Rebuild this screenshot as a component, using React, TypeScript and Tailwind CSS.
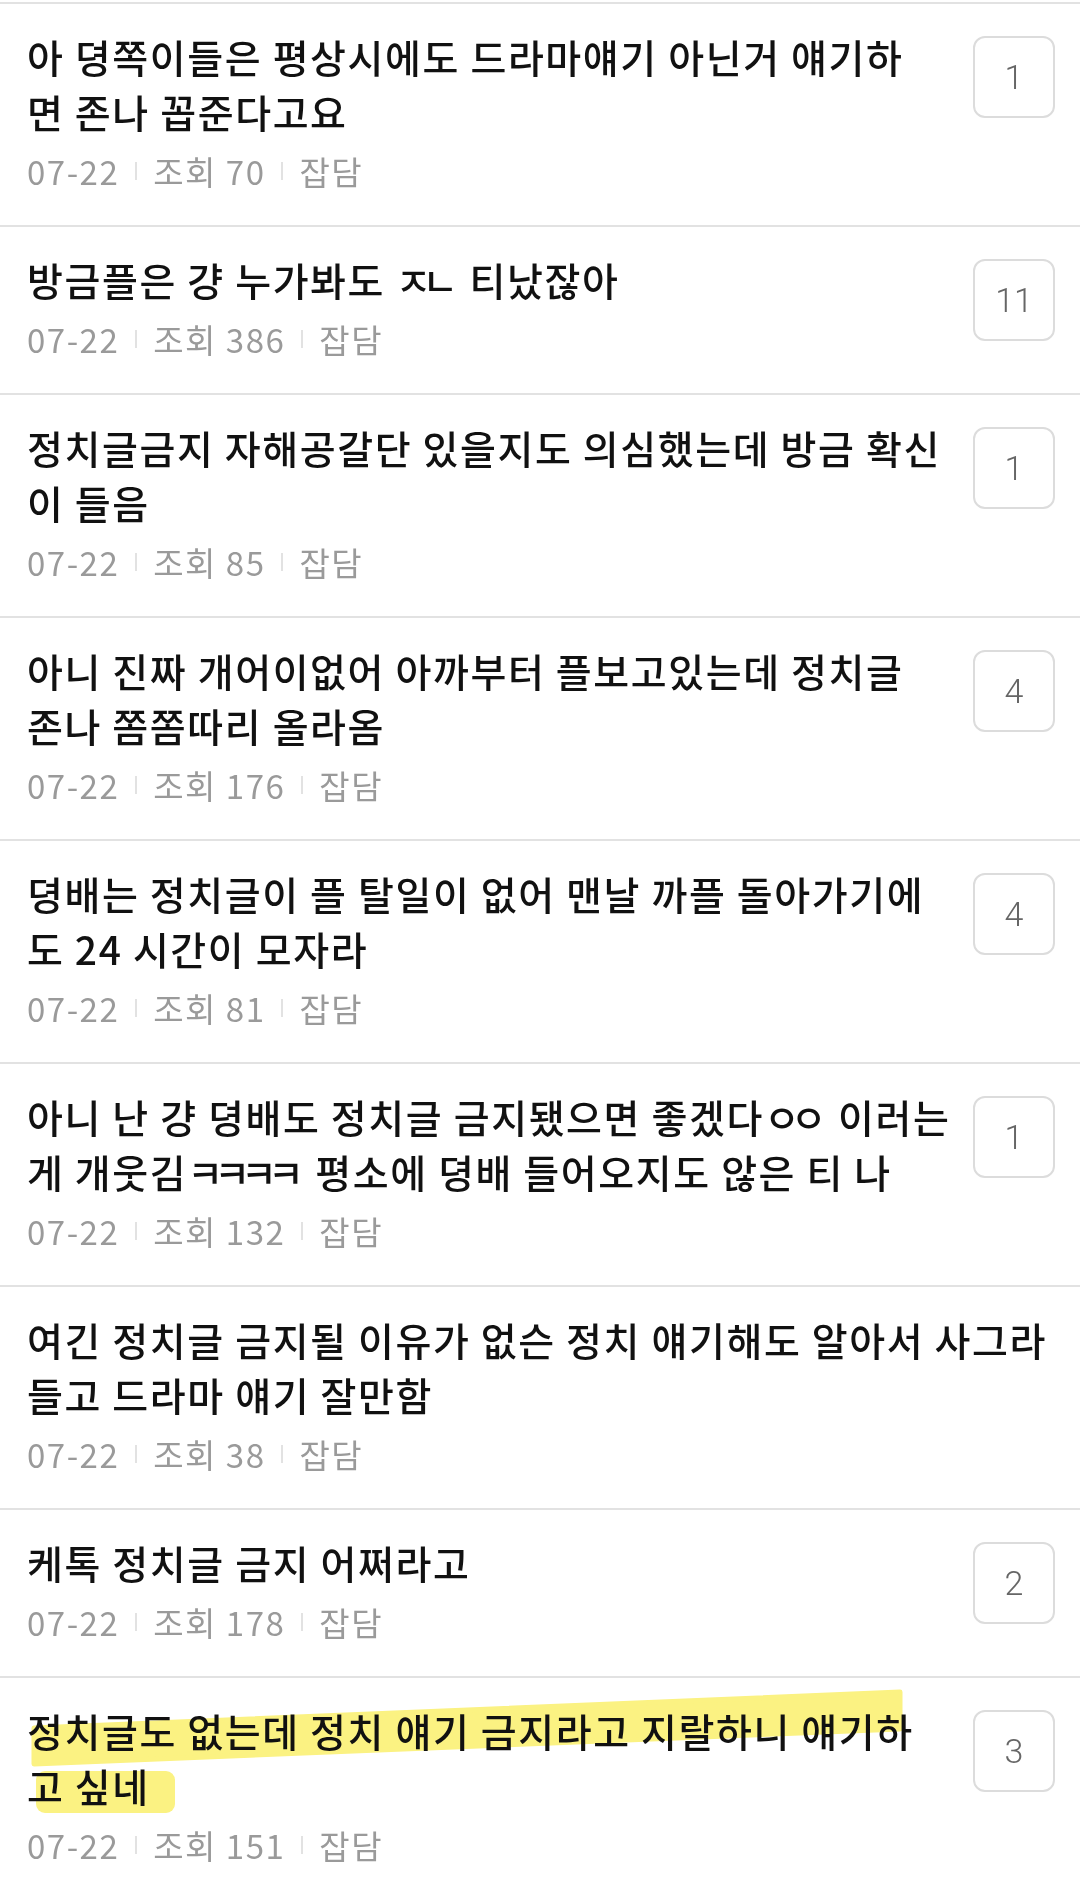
import React from 'react';

interface Post {
  lines: string[];
  views: number;
  comments?: number;
  highlight?: boolean;
}

const posts: Post[] = [
  { lines: ['아 뎡쪽이들은 평상시에도 드라마얘기 아닌거 얘기하', '면 존나 꼽준다고요'], views: 70, comments: 1 },
  { lines: ['방금플은 걍 누가봐도 ㅈㄴ 티났잖아'], views: 386, comments: 11 },
  { lines: ['정치글금지 자해공갈단 있을지도 의심했는데 방금 확신', '이 들음'], views: 85, comments: 1 },
  { lines: ['아니 진짜 개어이없어 아까부터 플보고있는데 정치글', '존나 쫌쫌따리 올라옴'], views: 176, comments: 4 },
  { lines: ['뎡배는 정치글이 플 탈일이 없어 맨날 까플 돌아가기에', '도 24 시간이 모자라'], views: 81, comments: 4 },
  { lines: ['아니 난 걍 뎡배도 정치글 금지됐으면 좋겠다ㅇㅇ 이러는', '게 개웃김ㅋㅋㅋㅋ 평소에 뎡배 들어오지도 않은 티 나'], views: 132, comments: 1 },
  { lines: ['여긴 정치글 금지될 이유가 없슨 정치 얘기해도 알아서 사그라', '들고 드라마 얘기 잘만함'], views: 38 },
  { lines: ['케톡 정치글 금지 어쩌라고'], views: 178, comments: 2 },
  { lines: ['정치글도 없는데 정치 얘기 금지라고 지랄하니 얘기하', '고 싶네'], views: 151, comments: 3, highlight: true },
];

// lone jamo (ㅋㅋ, ㅇㅇ) render full-width in Noto, squeeze them a bit
const renderLine = (line: string) =>
  line.split(/([ㄱ-ㅎ]+)/).map((part, i) =>
    /^[ㄱ-ㅎ]+$/.test(part) ? (
      <span key={i} className="mr-[10px] tracking-[-9px]">{part}</span>
    ) : (
      <React.Fragment key={i}>{part}</React.Fragment>
    )
  );

const Sep = () => <span className="mx-[16px] inline-block h-[18px] w-[2px] bg-[#e2e2e2]" />;

// yellow marker stroke drawn over the last post
const Marker = () => (
  <svg className="pointer-events-none absolute inset-0 h-full w-full mix-blend-multiply" width="1080" height="220">
    <path
      d="M34 50 L900 14 L900 51 L34 86 Z"
      fill="#fbf282"
      stroke="#fbf282"
      strokeWidth="5"
      strokeLinejoin="round"
    />
    <rect x="36" y="93" width="139" height="42" rx="9" fill="#fbf282" />
  </svg>
);

const PostRow: React.FC<{ post: Post }> = ({ post }) => (
  <div className="relative flex items-start border-t-2 border-[#e2e2e2] pl-[27px] pr-[25px] pt-[25px] pb-[34px]">
    {post.highlight && <Marker />}
    <div className="relative min-w-0 flex-1">
      <div className="text-[39px] font-medium leading-[55px] tracking-[1.6px] text-[#111]">
        {post.lines.map((l, i) => (
          <div key={i} className="whitespace-nowrap">{renderLine(l)}</div>
        ))}
      </div>
      <div className="mt-[12px] flex items-center text-[33px] leading-[40px] tracking-[1.5px] text-[#9a9a9a]">
        <span>07-22</span>
        <Sep />
        <span>조회 {post.views}</span>
        <Sep />
        <span>잡담</span>
      </div>
    </div>
    {post.comments !== undefined && (
      <div className="mt-[7px] flex h-[82px] w-[82px] shrink-0 items-center justify-center rounded-[12px] border-2 border-[#dcdcdc] bg-white">
        <span className="font-['Roboto',sans-serif] text-[34px] font-light text-[#666]">{post.comments}</span>
      </div>
    )}
  </div>
);

export default function App() {
  return (
    <div className="min-h-[1890px] w-[1080px] overflow-hidden bg-white pt-[2px] font-['Noto_Sans_CJK_KR','Noto_Sans',sans-serif]">
      {posts.map((p, i) => (
        <PostRow key={i} post={p} />
      ))}
    </div>
  );
}
